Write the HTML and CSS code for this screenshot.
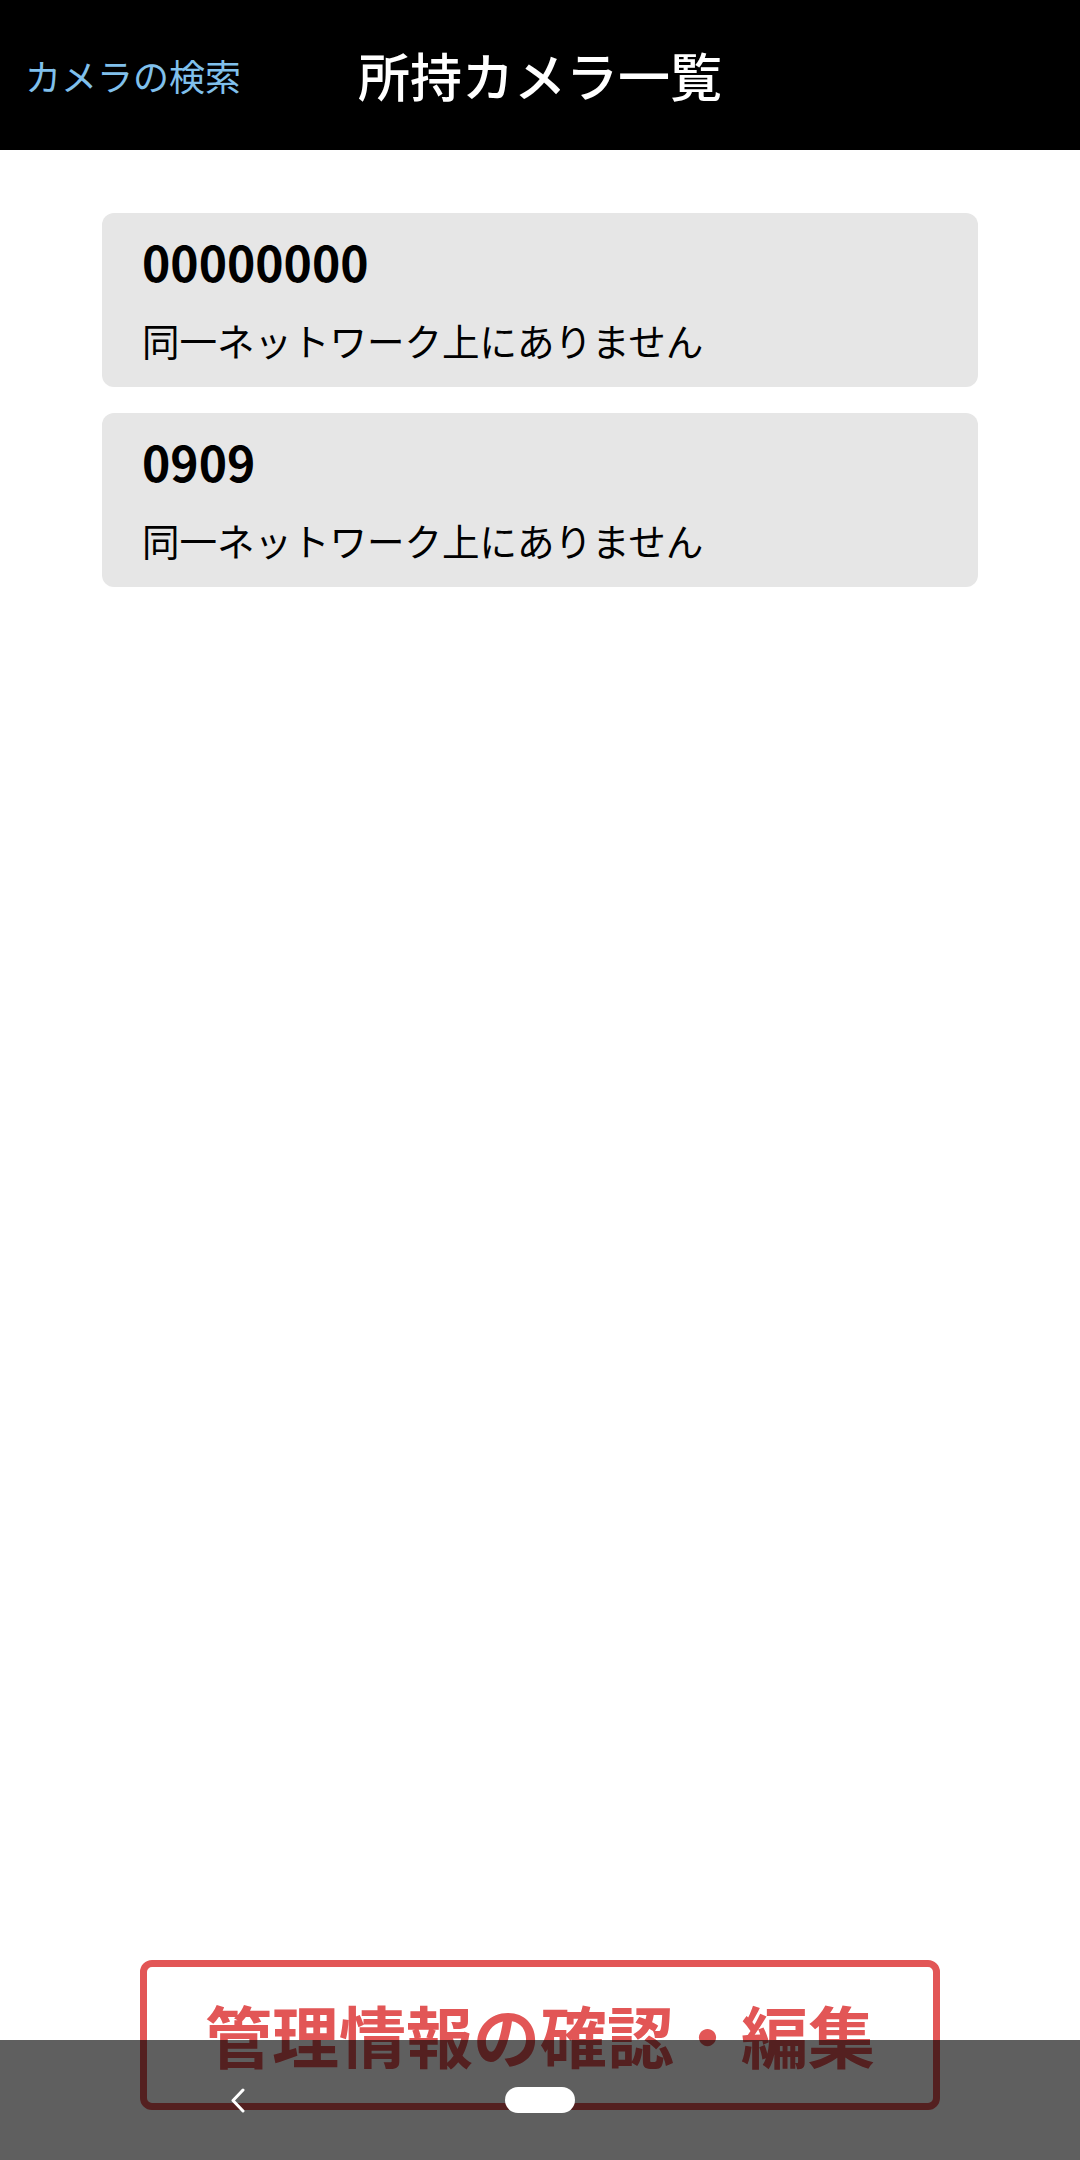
FILE: index.html
```html
<!DOCTYPE html>
<html lang="ja">
<head>
<meta charset="utf-8">
<title>所持カメラ一覧</title>
<link rel="stylesheet" href="styles.css">
</head>
<body>
<div class="screen">
  <header class="topbar">
    <a class="search-link">カメラの検索</a>
    <h1 class="title">所持カメラ一覧</h1>
    <span class="spacer"></span>
  </header>
  <main class="list">
    <div class="card">
      <div class="card-name">00000000</div>
      <div class="card-status">同一ネットワーク上にありません</div>
    </div>
    <div class="card">
      <div class="card-name">0909</div>
      <div class="card-status">同一ネットワーク上にありません</div>
    </div>
  </main>
  <footer class="footer">
    <button class="manage-btn">管理情報の確認・編集</button>
  </footer>
  <nav class="sysnav">
    <svg class="back" width="15" height="25" viewBox="0 0 15 25"><polyline points="13,2 3,12.5 13,23" fill="none" stroke="#fff" stroke-width="3" stroke-linecap="round" stroke-linejoin="round"/></svg>
    <span class="home-pill"></span>
  </nav>
</div>
</body>
</html>
```
FILE: styles.css
```css
* { box-sizing: border-box; }
html, body { margin: 0; padding: 0; background: #fff; }
body { font-family: "Noto Sans CJK JP", "Noto Sans", sans-serif; }
.screen {
  position: relative;
  width: 1080px;
  height: 2160px;
  display: flex;
  flex-direction: column;
  overflow: hidden;
}
.topbar {
  height: 150px;
  background: #000;
  display: grid;
  grid-template-columns: 1fr auto 1fr;
  align-items: center;
  flex-shrink: 0;
}
.search-link {
  color: #80c0ec;
  font-size: 36px;
  padding-left: 25px;
  line-height: 1;
}
.title {
  margin: 0;
  color: #fff;
  font-size: 52px;
  font-weight: 500;
  line-height: 1;
}
.list {
  flex: 1;
  padding: 63px 102px 0;
  display: flex;
  flex-direction: column;
  gap: 26px;
}
.card {
  height: 174px;
  background: #e6e6e6;
  border-radius: 12px;
  padding: 24px 40px 0;
}
.card-name {
  font-size: 48px;
  line-height: 48px;
  font-weight: 700;
  color: #000;
}
.card-status {
  margin-top: 36px;
  font-size: 37.5px;
  line-height: 37px;
  color: #000;
}
.footer {
  display: flex;
  justify-content: center;
  padding-bottom: 50px;
  flex-shrink: 0;
}
.manage-btn {
  width: 800px;
  height: 150px;
  border: 7px solid #e25656;
  border-radius: 12px;
  background: #fff;
  color: #e25656;
  font-family: "Noto Sans CJK JP", sans-serif;
  font-size: 67px;
  font-weight: 700;
  line-height: 1;
  display: flex;
  align-items: center;
  justify-content: center;
  padding: 0 0 4px;
}
.sysnav {
  position: absolute;
  left: 0;
  right: 0;
  bottom: 0;
  height: 120px;
  background: rgba(0, 0, 0, 0.627);
  display: flex;
  align-items: center;
  padding-left: 230px;
}
.back { display: block; }
.home-pill {
  margin-left: 260px;
  width: 70px;
  height: 26px;
  border-radius: 13px;
  background: #fff;
}
```
